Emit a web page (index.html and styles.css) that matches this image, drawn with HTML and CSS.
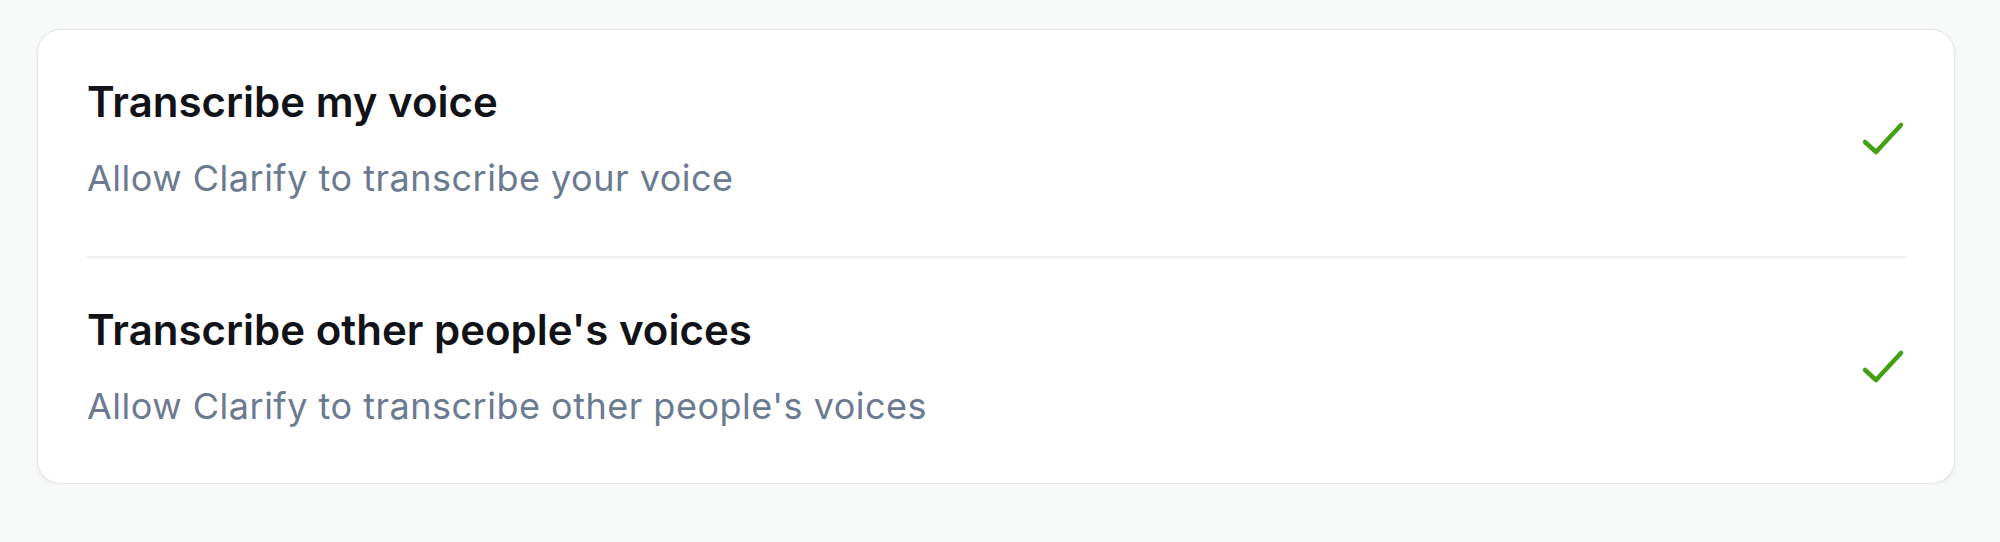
FILE: index.html
```html
<!DOCTYPE html>
<html>
<head>
  <meta charset="UTF-8">
  <title>Transcription settings</title>
  <link rel="stylesheet" href="styles.css">
</head>
<body>
  <div class="card">
    <div class="setting">
      <div class="setting-text">
        <h3>Transcribe my voice</h3>
        <p>Allow Clarify to transcribe your voice</p>
      </div>
      <svg class="check" width="44" height="35" viewBox="0 0 44 35" fill="none" stroke="currentColor" stroke-width="4.5" stroke-linecap="round" stroke-linejoin="round">
        <path d="M4 21 L15 31 L40 4"/>
      </svg>
    </div>
    <div class="setting">
      <div class="setting-text">
        <h3>Transcribe other people's voices</h3>
        <p>Allow Clarify to transcribe other people's voices</p>
      </div>
      <svg class="check" width="44" height="35" viewBox="0 0 44 35" fill="none" stroke="currentColor" stroke-width="4.5" stroke-linecap="round" stroke-linejoin="round">
        <path d="M4 21 L15 31 L40 4"/>
      </svg>
    </div>
  </div>
</body>
</html>
```

FILE: styles.css
```css
/* Réglages de transcription */
body {
  font-family: Inter, "Noto Sans", sans-serif;
  margin: 0;
  padding: 29px 45px 0 37px;
  background-color: #f7f8f8;
}
.card {
  background-color: #fff;
  border: 1px solid #e4e6e7;
  border-radius: 24px;
  box-shadow: 0 2px 4px rgba(0, 0, 0, 0.06);
  padding: 0 48px 0 49px;
}
.setting {
  display: flex;
  align-items: center;
  justify-content: space-between;
  padding: 44px 0 54px;
  border-bottom: 2px solid #eceef1;
}
.setting:last-child {
  border-bottom: none;
  padding-bottom: 53px;
}
.setting-text h3 {
  margin: 0 0 24px;
  font-size: 42px;
  line-height: 56px;
  font-weight: 600;
  color: #121319;
}
.setting-text p {
  margin: 0;
  font-size: 36px;
  line-height: 48px;
  letter-spacing: 0.5px;
  color: #6b7a90;
}
.check {
  color: #43a012;
  flex-shrink: 0;
  margin-right: 1px;
}
```
